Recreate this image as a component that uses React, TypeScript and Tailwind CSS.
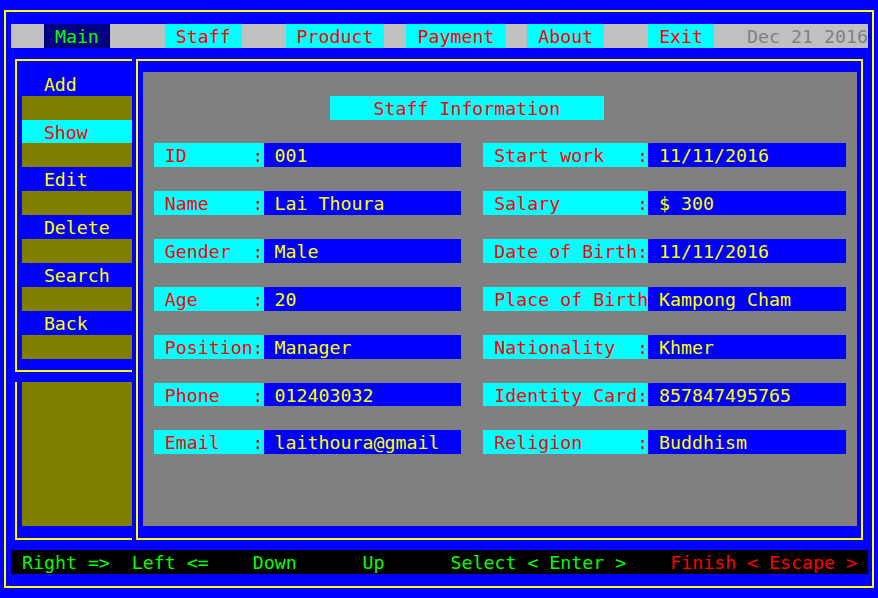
import React from 'react';

// DOS console look: 80x25 cells, 1ch = 10.975px, one row = 23.92px
const menu: { text: string; w: string; cls: string }[] = [
  { text: '', w: 'w-[3ch]', cls: '' },
  { text: ' Main ', w: 'w-[6ch]', cls: 'bg-[#000080] text-[#00ff00]' },
  { text: '', w: 'w-[5ch]', cls: '' },
  { text: ' Staff ', w: 'w-[7ch]', cls: 'bg-[#00ffff] text-[#ff0000]' },
  { text: '', w: 'w-[4ch]', cls: '' },
  { text: ' Product ', w: 'w-[9ch]', cls: 'bg-[#00ffff] text-[#ff0000]' },
  { text: '', w: 'w-[2ch]', cls: '' },
  { text: ' Payment ', w: 'w-[9ch]', cls: 'bg-[#00ffff] text-[#ff0000]' },
  { text: '', w: 'w-[2ch]', cls: '' },
  { text: ' About ', w: 'w-[7ch]', cls: 'bg-[#00ffff] text-[#ff0000]' },
  { text: '', w: 'w-[4ch]', cls: '' },
  { text: ' Exit ', w: 'w-[6ch]', cls: 'bg-[#00ffff] text-[#ff0000]' },
  { text: '', w: 'w-[3ch]', cls: '' },
  { text: 'Dec 21 2016', w: 'w-[11ch]', cls: 'text-[#808080]' },
];

const sideItems = [
  { label: 'Add', active: false },
  { label: 'Show', active: true },
  { label: 'Edit', active: false },
  { label: 'Delete', active: false },
  { label: 'Search', active: false },
  { label: 'Back', active: false },
];

const fields: [string, string, string, string][] = [
  [' ID      :', ' 001', ' Start work   :', ' 11/11/2016'],
  [' Name    :', ' Lai Thoura', ' Salary       :', ' $ 300'],
  [' Gender  :', ' Male', ' Date of Birth:', ' 11/11/2016'],
  [' Age     :', ' 20', ' Place of Birth', ' Kampong Cham'],
  [' Position:', ' Manager', ' Nationality  :', ' Khmer'],
  [' Phone   :', ' 012403032', ' Identity Card:', ' 857847495765'],
  [' Email   :', ' laithoura@gmail', ' Religion     :', ' Buddhism'],
];

const Row: React.FC<{ className?: string; children?: React.ReactNode }> = ({ className = '', children }) => (
  <div className={`h-[23.92px] pt-px leading-[23.92px] whitespace-pre shrink-0 ${className}`}>{children}</div>
);

export default function App() {
  return (
    <div
      className="w-[878px] h-[598px] bg-[#0000ff] overflow-hidden pl-[4px] pt-[10px] text-[18.25px]"
      style={{ fontFamily: '"DejaVu Sans Mono", "Liberation Mono", monospace' }}
    >
      <div className="w-[870px] h-[578px] border-2 border-[#ffff00] pl-[4.975px] pt-[11.92px] flex flex-col">
        {/* menu bar */}
        <div className="flex w-[78ch] bg-[#c0c0c0]">
          {menu.map((m, i) => (
            <Row key={i} className={`${m.w} ${m.cls}`}>{m.text}</Row>
          ))}
        </div>

        {/* body */}
        <div className="flex mt-[11.16px] h-[481px]">
          <div className="flex flex-col ml-[4px]">
            <div className="border-l-2 border-t-2 border-b-2 border-[#ffff00] pl-[4.95px] pt-[10.76px] pb-[11.2px]">
              {sideItems.map((s) => (
                <React.Fragment key={s.label}>
                  <Row className={`w-[10ch] ${s.active ? 'bg-[#00ffff] text-[#ff0000]' : 'text-[#ffff00]'}`}>
                    {'  ' + s.label}
                  </Row>
                  <Row className="w-[10ch] bg-[#808000]" />
                </React.Fragment>
              ))}
            </div>
            <div className="mt-[10.7px] border-l-2 border-b-2 border-[#ffff00] pl-[4.95px] pb-[11.8px]">
              <div className="w-[10ch] h-[143.52px] bg-[#808000]" />
            </div>
          </div>

          <div className="ml-[4.3px] w-[727px] h-[481px] border-2 border-[#ffff00] pl-[4.7px] pt-[10.76px]">
            <div className="w-[65ch] h-[454.5px] bg-[#808080] flex flex-col pt-[23.92px] gap-[23.92px]">
              <Row className="ml-[17ch] w-[25ch] bg-[#00ffff] text-[#ff0000]">{'    Staff Information    '}</Row>
              {fields.map((f) => (
                <div key={f[0]} className="flex ml-[1ch]">
                  <Row className="w-[10ch] bg-[#00ffff] text-[#ff0000]">{f[0]}</Row>
                  <Row className="w-[18ch] bg-[#0000ff] text-[#ffff00]">{f[1]}</Row>
                  <div className="w-[2ch] shrink-0" />
                  <Row className="w-[15ch] bg-[#00ffff] text-[#ff0000]">{f[2]}</Row>
                  <Row className="w-[18ch] bg-[#0000ff] text-[#ffff00]">{f[3]}</Row>
                </div>
              ))}
            </div>
          </div>
        </div>

        {/* key help */}
        <Row className="mt-[10.2px] w-[78ch] bg-black text-[#00ff00]">
          {' Right =>  Left <=    Down      Up      Select < Enter >    '}
          <span className="text-[#ff0000]">{'Finish < Escape >'}</span>
        </Row>
      </div>
    </div>
  );
}
